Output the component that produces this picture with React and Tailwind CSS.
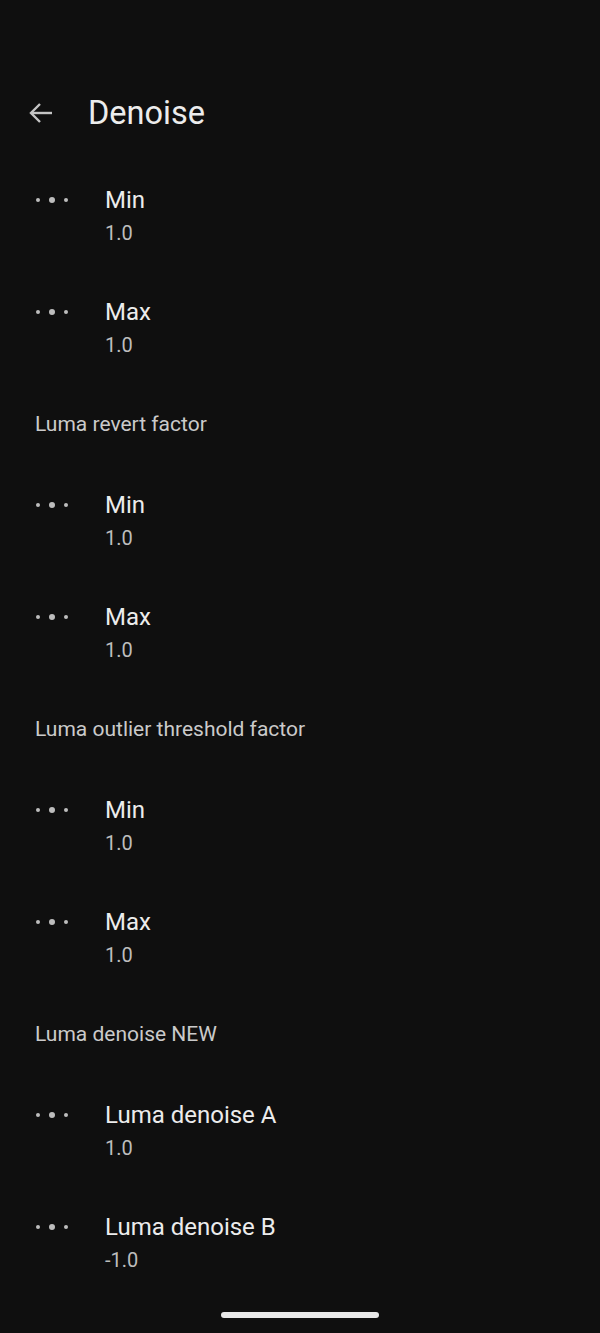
import React from 'react';

const sections = [
  { header: null, items: [{ title: 'Min', value: '1.0' }, { title: 'Max', value: '1.0' }] },
  { header: 'Luma revert factor', items: [{ title: 'Min', value: '1.0' }, { title: 'Max', value: '1.0' }] },
  { header: 'Luma outlier threshold factor', items: [{ title: 'Min', value: '1.0' }, { title: 'Max', value: '1.0' }] },
  { header: 'Luma denoise NEW', items: [{ title: 'Luma denoise A', value: '1.0' }, { title: 'Luma denoise B', value: '-1.0' }] },
];

function Dots() {
  return (
    <div className="flex items-center gap-[9px] w-[34px]">
      <span className="block w-[4px] h-[4px] rounded-full bg-[#bdbdbd]" />
      <span className="block w-[6px] h-[6px] rounded-full bg-[#bdbdbd]" />
      <span className="block w-[4px] h-[4px] rounded-full bg-[#bdbdbd]" />
    </div>
  );
}

function Item({ title, value }) {
  return (
    <div className="h-[112px] flex">
      <div className="h-[32px] flex items-center pl-[36px] w-[105px]">
        <Dots />
      </div>
      <div>
        <div className="text-[24px] leading-[32px] text-[#ececec]">{title}</div>
        <div className="text-[20px] leading-[32px] mt-px text-[#bdbdbd]">{value}</div>
      </div>
    </div>
  );
}

export default function App() {
  return (
    <div
      className="relative w-[600px] h-[1333px] bg-[#0f0f0f] overflow-hidden"
      style={{ fontFamily: 'Roboto, "Noto Sans", sans-serif' }}
    >
      <div className="pt-[93px] pb-[51px]">
        <div className="flex items-center h-[40px]">
          <div className="w-[88px] pl-[28px] flex items-center">
            <svg width="25" height="24" viewBox="0 0 25 24" fill="none" stroke="#c4c4c4" strokeWidth="2.4">
              <path d="M24 12H3" />
              <path d="M12 3L3 12l9 9" />
            </svg>
          </div>
          <h1 className="text-[32.5px] leading-[40px] text-[#ececec]">Denoise</h1>
        </div>
      </div>

      {sections.map((section, i) => (
        <div key={i}>
          {section.header && (
            <div className="h-[81px] pl-[35px]">
              <div className="text-[21px] leading-[32px] text-[#cacaca]">{section.header}</div>
            </div>
          )}
          {section.items.map((item, j) => (
            <Item key={j} title={item.title} value={item.value} />
          ))}
        </div>
      ))}

      <div className="absolute left-0 right-0 bottom-[15px] flex justify-center">
        <div className="w-[158px] h-[6px] rounded-full bg-[#e8e8e8]" />
      </div>
    </div>
  );
}
